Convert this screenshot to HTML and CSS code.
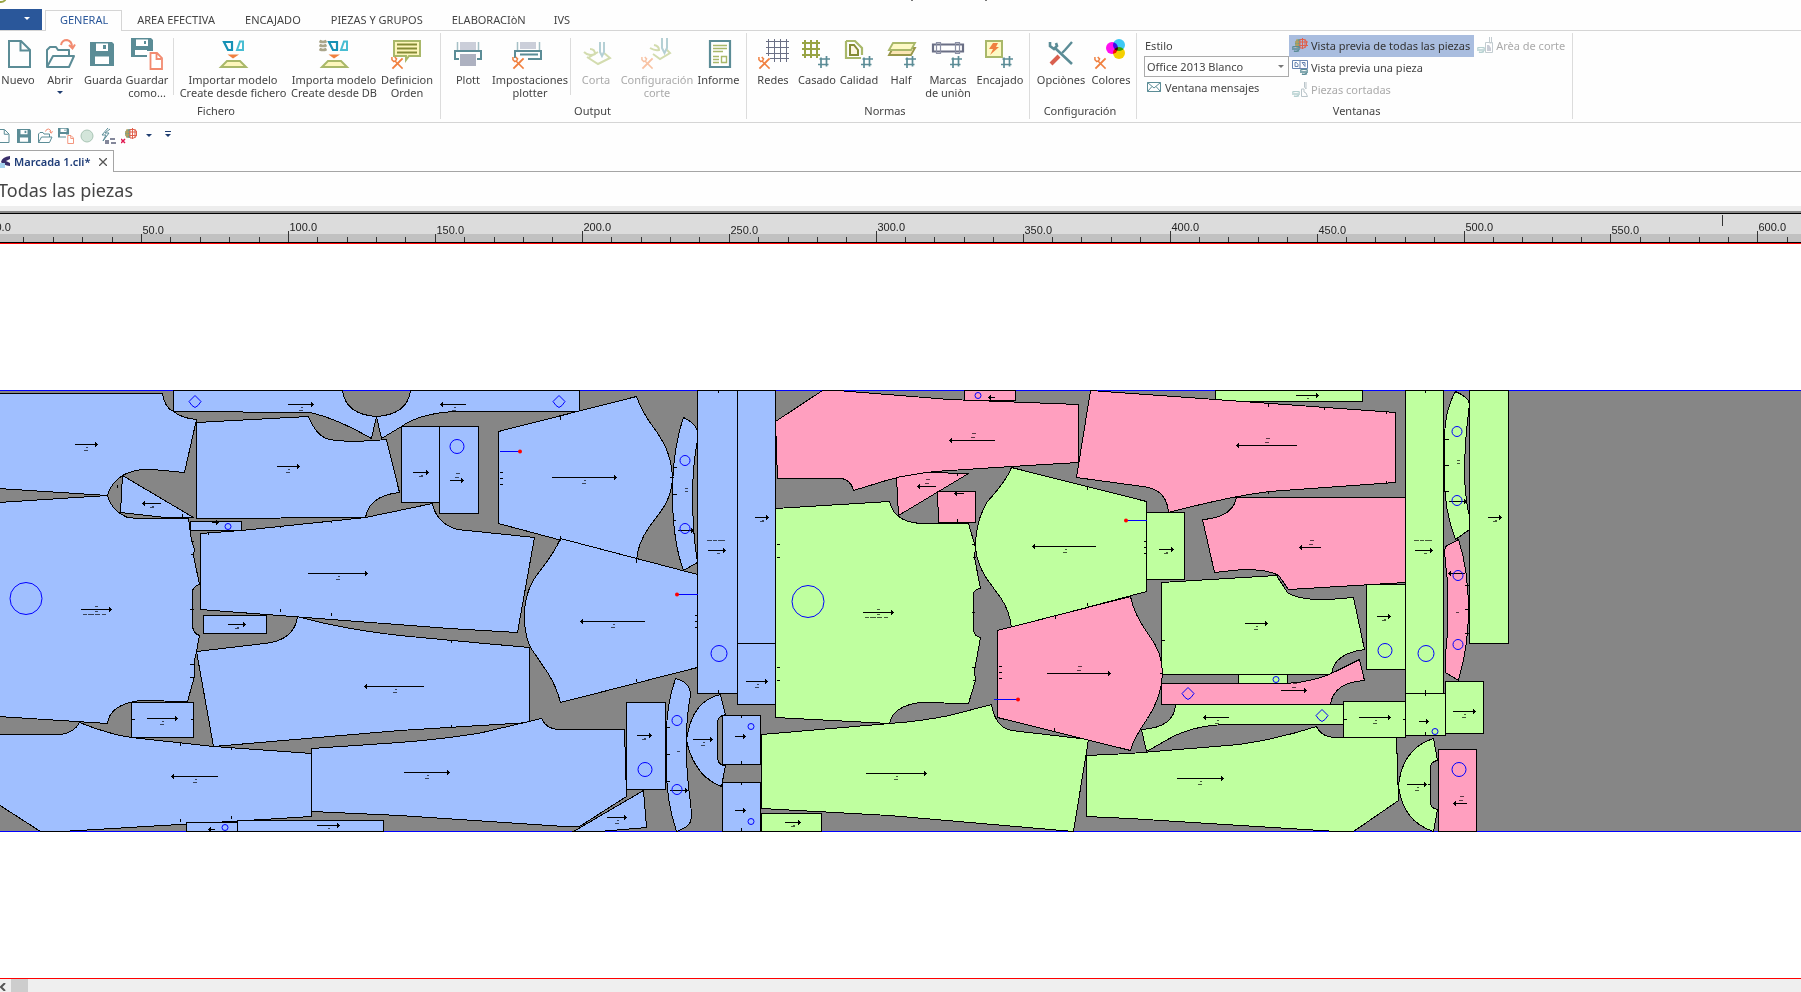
FILE: index.html
```html
<!DOCTYPE html>
<html lang="es">
<head>
<meta charset="utf-8">
<title>Marcada 1.cli</title>
<link rel="stylesheet" href="styles.css">
</head>
<body>
<svg class="defs" aria-hidden="true">
  <defs>
    <symbol id="tools" viewBox="0 0 14 14" overflow="visible">
      <path d="M1 0V3L3 5L5 4L6 2L4 0M4 4L12.500 12.500" fill="none" stroke="currentColor" stroke-width="1.600"/>
      <path d="M12.500 1.500L7 7L1.500 12.500" fill="none" stroke="currentColor" stroke-width="2"/>
    </symbol>
    <symbol id="hash" viewBox="0 0 12 12" overflow="visible">
      <path d="M3 1.500V12M8.500 0V10.500M1.500 3H12M0 8.500H10.500" fill="none" stroke="#5b8c96" stroke-width="1.700"/>
    </symbol>
    <symbol id="floppy" viewBox="0 0 24 24">
      <path d="M0 0H22L24 2V24H0Z" fill="#5b8c96"/>
      <path d="M6 1.500H18V9H6ZM5 14.500H19V22H5Z" fill="#fff"/>
      <path d="M13 3H16V7H13Z" fill="#5b8c96"/>
    </symbol>
    <symbol id="folder" viewBox="0 0 32 32">
      <path d="M3 29V12L6 9H12L14 12H25V18M3 29L9 18H30L25 29Z" fill="none" stroke="#5b8c96" stroke-width="2" stroke-linejoin="round"/>
      <path d="M17 7Q18 2 23 2Q28 3 28 9M25 7L28.500 10.500L31 6.500" fill="none" stroke="#f28b70" stroke-width="2"/>
    </symbol>
    <symbol id="saveas" viewBox="0 0 32 32">
      <path d="M0 0H20L22 2V13H16V19H0Z" fill="#5b8c96"/>
      <path d="M5 1.500H17V8H5ZM4 12H16V17H4Z" fill="#fff"/>
      <path d="M13 3H15V6H13Z" fill="#5b8c96"/>
      <path d="M19.500 15H26L31 20V31H19.500ZM25.500 16V21H30" fill="#fff" stroke="#f28b70" stroke-width="1.800"/>
    </symbol>
    <symbol id="page" viewBox="0 0 32 32">
      <path d="M7 3H19L28 12V29H7ZM18.500 4V12.500H27" fill="none" stroke="#5b8c96" stroke-width="2"/>
    </symbol>
    <symbol id="globe" viewBox="0 0 16 16">
      <path d="M8 2Q3 2 3 6.500Q3 11 8 11Z" fill="#6c9b8d"/>
      <path d="M5 2V11M3 5H8M3 8H8" stroke="#c9a14e" fill="none"/>
      <path d="M8 2.500H12L14.500 4V9L12 11H8ZM10.500 1V12M13 2V11M7 5H16M7 8.500H16" fill="none" stroke="#e0604c"/>
    </symbol>
    <symbol id="eye" viewBox="0 0 8 6">
      <path d="M0 1.500Q4-1 8 1.500M0 3H8M2 5Q4 6 7 4.500" fill="none" stroke="currentColor" stroke-width="1.400"/>
    </symbol>
  </defs>
</svg>

<header class="titlebar">
  <svg class="titlebar-art" width="1000" height="9" aria-hidden="true">
    <circle cx="1" cy="-3" r="5" fill="none" stroke="#99a546" stroke-width="2"/>
    <path d="M911 0.500H913M985 0.500H987" stroke="#777"/>
  </svg>
</header>

<nav class="tabs">
  <button class="file-menu" aria-label="Archivo"><span class="caret caret-light"></span></button>
  <button class="tab tab-active">GENERAL</button>
  <button class="tab">AREA EFECTIVA</button>
  <button class="tab">ENCAJADO</button>
  <button class="tab">PIEZAS Y GRUPOS</button>
  <button class="tab">ELABORACIòN</button>
  <button class="tab">IVS</button>
</nav>

<div class="ribbon">
  <section class="group group-file">
    <div class="tools tools-file">
      <button class="tool"><svg class="icon"><use href="#page"/></svg>Nuevo</button>
      <button class="tool"><svg class="icon"><use href="#folder"/></svg>Abrir<span class="caret caret-under"></span></button>
      <button class="tool"><svg class="icon"><use href="#floppy" x="3" y="4" width="24" height="24"/></svg>Guarda</button>
      <button class="tool"><svg class="icon"><use href="#saveas"/></svg>Guardar<br>como...</button>
      <span class="split"></span>
      <button class="tool"><svg class="icon">
        <path d="M7 4H15V12H11Z" fill="none" stroke="#1691b5" stroke-width="2.200"/>
        <path d="M20 12H26V3.500H23Z" fill="none" stroke="#48bdd2" stroke-width="2"/>
        <path d="M10.500 16.500H22L16 20.500Z" fill="#f08040"/>
        <path d="M10 23H23L29 29H4Z" fill="#fdf6bc" stroke="#a9b86a" stroke-width="2"/></svg>Importar modelo<br>Create desde fichero</button>
      <button class="tool"><svg class="icon">
        <path d="M1.500 3Q5 5 8.500 3M1.500 7Q5 9 8.500 7M1.500 11Q5 13 8.500 11" fill="none" stroke="#aaa58a" stroke-width="2.600"/>
        <path d="M11 4H19V12H15Z" fill="none" stroke="#1691b5" stroke-width="2.200"/>
        <path d="M23 12H29V3.500H26Z" fill="none" stroke="#48bdd2" stroke-width="2"/>
        <path d="M10.500 16.500H22L16 20.500Z" fill="#f08040"/>
        <path d="M10 23H23L29 29H4Z" fill="#fdf6bc" stroke="#a9b86a" stroke-width="2"/></svg>Importa modelo<br>Create desde DB</button>
      <button class="tool"><svg class="icon orange">
        <path d="M3 3H29V18H18L15 22V18H3Z" fill="#fdf6bc" stroke="#a9b86a" stroke-width="2"/>
        <path d="M6 6.500H26M6 10.500H26M6 14.500H26" stroke="#858b35" stroke-width="1.800"/>
        <use href="#tools" x="0" y="19" width="13" height="13"/></svg>Definicion<br>Orden</button>
    </div>
    <h2 class="caption">Fichero</h2>
  </section>

  <section class="group">
    <div class="tools tools-output">
      <button class="tool"><svg class="icon">
        <path d="M8 4H24V12H8Z" fill="#cbced9"/><path d="M5.500 4V12M26.500 4V12" stroke="#a5c0c6" stroke-width="1.500"/>
        <path d="M7 21H3V13H29V21H25" fill="none" stroke="#5b8c96" stroke-width="2"/>
        <path d="M8 16H24V28H8Z" fill="#adb1c0"/></svg>Plott</button>
      <button class="tool"><svg class="icon orange">
        <path d="M6 4H22V11H6Z" fill="#cbced9"/><path d="M3.500 4V12M25.500 4V12" stroke="#a5c0c6" stroke-width="1.500"/>
        <path d="M1 20V13H27V21H14M6 16.500H24" fill="none" stroke="#5b8c96" stroke-width="2"/>
        <use href="#tools" x="-2" y="19" width="13" height="13"/></svg>Impostaciones<br>plotter</button>
      <span class="split"></span>
      <button class="tool" disabled><svg class="icon">
        <path d="M7 19L18 26L30 20L24 15M4 14Q9 19 15 16Q15 11 10 11M8 20L18 14" fill="none" stroke="#d3dcaf" stroke-width="2"/>
        <path d="M20 4V14L22 18L24 14V4" fill="none" stroke="#b5d0d5" stroke-width="2"/></svg>Corta</button>
      <button class="tool" disabled><svg class="icon faded">
        <path d="M12 16L19 21L29 15L25 11M9 10Q14 13 18 12Q18 8 13 7" fill="none" stroke="#d3dcaf" stroke-width="2"/>
        <path d="M21 0V10L23.500 15L26 10V0" fill="none" stroke="#b5d0d5" stroke-width="2"/>
        <use href="#tools" x="0" y="19" width="13" height="13"/></svg>Configuración<br>corte</button>
      <button class="tool"><svg class="icon">
        <path d="M7 3H27V29H7Z" fill="#fff" stroke="#5b8c96" stroke-width="2.200"/>
        <path d="M10 7.500H24M10 10.500H24M10 13.500H20M10 18.500H16M10 21.500H16M10 24.500H16M18.500 18.500H23.500V24.500H18.500Z" fill="none" stroke="#a9b86a" stroke-width="1.400"/></svg>Informe</button>
    </div>
    <h2 class="caption">Output</h2>
  </section>

  <section class="group group-rules">
    <div class="tools tools-rules">
      <button class="tool"><svg class="icon orange">
        <path d="M11.500 1V24M17.500 1V24M23.500 1V24M29.500 1V24M9 3.500H32M9 9.500H32M9 15.500H32M9 20.500H32" stroke="#6a6f85"/>
        <path d="M0 18H13V24H0Z" fill="#fff"/>
        <use href="#tools" x="1" y="19" width="13" height="13"/></svg>Redes</button>
      <button class="tool"><svg class="icon">
        <path d="M4 2V20M10 2V20M16 2V20M1 5H19M1 11H19M1 17H19" stroke="#98a445" stroke-width="2"/>
        <use href="#hash" x="17" y="18" width="12" height="12"/></svg>Casado</button>
      <button class="tool"><svg class="icon">
        <path d="M3 3H12L19 10V17M18 20H3V3" fill="none" stroke="#a9b86a" stroke-width="2.200"/>
        <path d="M7 7H11L15 12V17H7Z" fill="#fdf6e0" stroke="#858b35" stroke-width="2"/>
        <use href="#hash" x="18" y="18" width="12" height="12"/></svg>Calidad</button>
      <button class="tool"><svg class="icon">
        <path d="M4 17L8 10H30L26 17Z" fill="#fbe5b5" stroke="#98974a" stroke-width="1.800"/>
        <path d="M4 12L8 5H30L26 12Z" fill="#fdf9c4" stroke="#a9b86a" stroke-width="1.800"/>
        <use href="#hash" x="19" y="18" width="12" height="12"/></svg>Half</button>
      <button class="tool"><svg class="icon">
        <path d="M1 6.500H31V13.500H1Z" fill="#fff" stroke="#6a6f85" stroke-width="2.200"/>
        <path d="M4.500 4.500H8.500V15.500H4.500ZM23.500 4.500H27.500V15.500H23.500Z" fill="none" stroke="#8b90a5" stroke-width="1.200"/>
        <use href="#hash" x="18" y="18" width="12" height="12"/></svg>Marcas<br>de uniòn</button>
      <button class="tool"><svg class="icon">
        <rect x="2" y="3" width="16" height="16" fill="#fdf9c4" stroke="#a9b86a" stroke-width="2"/>
        <path d="M9 5H14L12 9H15L6 17L9 11H5Z" fill="#f08040"/>
        <use href="#hash" x="17" y="18" width="12" height="12"/></svg>Encajado</button>
    </div>
    <h2 class="caption">Normas</h2>
  </section>

  <section class="group group-config">
    <div class="tools tools-config">
      <button class="tool"><svg class="icon">
        <path d="M5 4V8L9 11L12 8L11 5M10 10L27 26" fill="none" stroke="#5b8c96" stroke-width="2.600"/>
        <path d="M27 4L20 12L17 15" fill="none" stroke="#5b8c96" stroke-width="2.400"/>
        <path d="M14 18L6 26" stroke="#d9604f" stroke-width="4"/></svg>Opciònes</button>
      <button class="tool"><svg class="icon orange">
        <g class="inks"><circle cx="24" cy="7" r="6" fill="#3cc8f5"/><circle cx="17" cy="10" r="6" fill="#ff10f0"/><circle cx="24" cy="15" r="6" fill="#f5d000"/></g>
        <use href="#tools" x="-1" y="19" width="13" height="13"/></svg>Colores</button>
    </div>
    <h2 class="caption">Configuración</h2>
  </section>

  <section class="group group-windows">
    <div class="windows">
      <div class="style-box">
        <label for="style">Estilo</label>
        <span class="select-wrap"><select id="style" class="select"><option>Office 2013 Blanco</option></select><span class="caret caret-grey"></span></span>
        <button class="row"><svg class="icon16"><path d="M1.500 3.500H14.500V12.500H1.500ZM1.500 3.500L8 9L14.500 3.500M1.500 12.500L6 7.500M14.500 12.500L10 7.500" fill="none" stroke="#5b8c96"/></svg>Ventana mensajes</button>
      </div>
      <div class="views">
        <button class="row row-on"><svg class="icon16"><use href="#globe"/><use class="teal" href="#eye" x="0" y="9" width="8" height="6"/></svg>Vista previa de todas las piezas</button>
        <button class="row"><svg class="icon16"><path d="M.5 1.500H15.500V9.500H.5ZM8 1V10M3 3.500V7.500H6V5.500L4.500 3.500ZM10 3.500H13V7.500Z" fill="none" stroke="#6684b0"/><use class="teal" href="#eye" x="8" y="10" width="8" height="6"/></svg>Vista previa una pieza</button>
        <button class="row" disabled><svg class="icon16"><path d="M12.500 1V6L14 8V1M9.500 8V15.500H15.500L14 12L12 11V8Z" fill="none" stroke="#b9c4c9"/><use class="pale" href="#eye" x="0" y="10" width="8" height="6"/></svg>Piezas cortadas</button>
      </div>
      <div class="views">
        <button class="row" disabled><svg class="icon16"><path d="M12.500 0V6L14.500 6V0M8.500 5.500H15.500V15.500H8.500Z" fill="none" stroke="#c3ccd0"/><path d="M10 8H12L14 11V14H10Z" fill="#c9ccd6"/><use class="pale" href="#eye" x="0" y="10" width="8" height="6"/></svg>Arèa de corte</button>
      </div>
    </div>
    <h2 class="caption">Ventanas</h2>
  </section>
</div>

<div class="quick">
  <button class="quick-btn quick-cut" aria-label="Nuevo"><svg class="icon16"><use href="#page"/></svg></button>
  <button class="quick-btn" aria-label="Guarda"><svg class="icon16"><use href="#floppy" x="1" y="1" width="14" height="14"/></svg></button>
  <button class="quick-btn" aria-label="Abrir"><svg class="icon16"><use href="#folder"/></svg></button>
  <button class="quick-btn" aria-label="Guardar como"><svg class="icon16"><use href="#saveas"/></svg></button>
  <button class="quick-btn" aria-label="Estado"><svg class="icon16"><circle cx="8" cy="8" r="6" fill="#d3e5da" stroke="#a9c5b5"/></svg></button>
  <button class="quick-btn" aria-label="Encajado"><svg class="icon16"><path d="M8 0L2 7H6L3 13L9 5H5L10 1" fill="none" stroke="#5b8c96"/><path d="M5 12H9V16H5ZM10 10H15V12H10ZM11 14H16V16H11Z" fill="#83879a"/></svg></button>
  <button class="quick-btn" aria-label="Vista"><svg class="icon16"><use href="#globe" x="1" y="-1" width="16" height="16"/><path d="M0 11L4 15M4 11L0 15" stroke="#e01850" stroke-width="1.500"/></svg></button>
  <button class="quick-btn quick-small" aria-label="Opciones de vista"><span class="caret"></span></button>
  <button class="quick-btn quick-small" aria-label="Personalizar"><span class="caret caret-bar"></span></button>
</div>

<div class="doc-tabs">
  <div class="doc-tab">
    <svg class="doc-icon" aria-hidden="true"><path d="M10 1Q2 2 1 7Q3 10 10 11V8L6 6L10 4Z" fill="#3a2f6b"/><path d="M0 8H5V13H0Z" fill="#a5d3ef"/></svg>
    <a class="doc-name" href="#marker">Marcada 1.cli*</a>
    <button class="doc-close" aria-label="Cerrar"><svg width="8" height="8"><path d="M0 0L8 8M8 0L0 8" stroke="#555" stroke-width="1.300"/></svg></button>
  </div>
</div>

<h1 class="view-title">Todas las piezas</h1>
<div class="ruler-band"></div>
<svg class="ruler" id="ruler" aria-label="Regla"></svg>

<main class="stage" id="marker">
<svg class="layout" viewBox="0 389 1801 444" preserveAspectRatio="xMinYMid slice" aria-label="Marcada">
  <rect x="-1" y="390" width="1803" height="442" fill="#868686"/>
  <path class="bounds" d="M0 390.500H1801M0 831.500H1801"/>
  <g class="piece blue" transform="translate(-0.5 0.5)">
    <path d="M-1 393H163Q165 407 174 411Q183 418 197 419L185 472L153 469Q135 468 123 475Q111 483 108 495L-1 488Z"/>
    <path d="M-1 502L108 495Q112 510 128 517Q145 519 189 518L192 540L195 549L194 555L200 584Q193 586 193 592V626Q194 633 200 635L197 651L195 660V676L188 701L141 700Q110 704 108 723L-1 716Z"/>
    <path d="M123 475L194 517L166 517L121 512Z"/>
    <path d="M174 390H343Q346 414 377 416L372 438Q335 417 310 412L174 411Z"/>
    <path d="M411 390H580V411H455Q420 413 402 426L382 438L377 416Q408 414 411 390Z"/>
    <path d="M197 422L309 416Q315 432 326 438Q345 443 387 439L400 492Q370 495 366 517L197 518Z"/>
    <path d="M191 521H242V530H191ZM204 615H267V633H204Z"/>
    <path d="M201 533L242 530L366 517L433 503Q437 523 458 529L535 537L518 632L450 628L201 609Z"/>
    <path d="M197 651L265 643Q295 640 298 616Q340 628 400 635L485 643L530 647V722L400 730L214 746Z"/>
    <path d="M132 702H194V737H132Z"/>
    <path d="M-1 734H61Q75 732 80 722Q110 734 132 737L214 746L312 753V816L214 822L62 831H41L-1 804Z"/>
    <path d="M187 822H238V831H187ZM238 820H384V831H238Z"/>
    <path d="M312 748L400 742Q450 738 483 732L542 718Q547 729 560 729H625L627 796L580 826H565L400 815L312 811Z"/>
    <path d="M574 831L644 790L647 827L600 831Z"/>
    <path d="M627 702H666V789H627ZM402 426H440V502H402ZM440 426H479V513H440Z"/>
    <path d="M499 431L637 396Q643 413 657 431C668 447 672 460 673 477C672 500 662 510 650 526Q638 543 637 560L499 523Z"/>
    <path d="M561 538L698 574V667L561 702Q557 686 548 672L531 647Q524 632 525 612Q526 588 540 571Q555 552 561 538Z"/>
    <path d="M684 417Q695 422 698 430V440Q690 480 695 540L698 562L684 570Q673 540 673 493Q673 450 684 417Z"/>
    <path d="M698 390H738V693H698ZM738 390H776V643H738ZM738 643H776V704H738Z"/>
    <path d="M676 678Q691 682 691 694Q683 738 690 795Q693 815 691 821Q690 826 677 831Q667 800 667 770V733Q667 704 676 678Z"/>
    <path d="M721 694L726 714Q718 716 718 722V758Q719 765 726 765L722 786Q695 776 687 740Q692 700 721 694Z"/>
    <path d="M723 715H761V764H723ZM723 782H761V831H723Z"/>
  </g>
  <g class="piece green" transform="translate(-0.5 0.5)">
    <path d="M776 508L890 501Q895 523 925 523H969L976 547L975 557L981 588Q974 589 974 594V630Q975 636 981 637L975 670L976 680L969 703L920 702Q893 706 890 723L776 717Z"/>
    <path d="M762 734L890 723Q920 721 950 715L992 704Q996 727 1012 730L1089 739L1074 831L890 815L762 808Z"/>
    <path d="M762 813H822V831H762Z"/>
    <path d="M1012 467L1147 501V591L1012 627Q1010 610 1001 597L987 578Q977 562 976 547Q976 520 988 501Q1007 480 1012 467Z"/>
    <path d="M1147 512H1185V579H1147Z"/>
    <path d="M1162 582L1277 575L1288 592Q1300 600 1330 599L1354 597L1365 649Q1334 653 1332 674H1162Z"/>
    <path d="M1367 584H1406V669H1367ZM1406 390H1444V693H1406ZM1406 693H1446V735H1406ZM1470 390H1509V643H1470ZM1446 681H1484V733H1446ZM1216 390H1363V401H1216ZM1239 674H1288V683H1239Z"/>
    <path d="M1456 391Q1470 397 1470 404Q1465 440 1465 475Q1466 500 1470 516V529L1456 539Q1445 510 1445 480V440Q1445 410 1456 391Z"/>
    <path d="M1087 755L1130 753L1240 744Q1280 738 1317 726Q1322 737 1337 737H1397L1399 800L1354 831H1337L1130 818L1087 816Z"/>
    <path d="M1176 704H1344V724H1227Q1193 725 1170 738L1147 751L1142 729Q1175 727 1176 704Z"/>
    <path d="M1344 701H1406V737H1344Z"/>
    <path d="M1434 738L1438 760Q1431 761 1431 767V802Q1431 808 1438 809L1434 831Q1403 821 1399 785Q1403 748 1434 738Z"/>
  </g>
  <g class="piece pink" transform="translate(-0.5 0.5)">
    <path d="M823 390H838L950 399L1079 404V462L1012 466L935 471Q910 474 890 479L854 490Q851 478 840 478H778L776 421Z"/>
    <path d="M897 477L927 472L969 473L899 515Z"/>
    <path d="M938 491H976V522H939ZM965 390H1016V400H965Z"/>
    <path d="M1091 390L1396 412V482L1270 491Q1230 496 1169 512Q1167 488 1143 486L1077 477Z"/>
    <path d="M1237 497H1406V582L1289 589L1280 576Q1272 569 1243 569L1215 572L1203 519Q1233 517 1237 497Z"/>
    <path d="M998 630L1131 596Q1134 613 1149 634Q1163 652 1163 673Q1162 697 1148 718Q1134 738 1131 750L998 717Z"/>
    <path d="M1162 683H1287Q1317 681 1336 671L1360 659L1365 680Q1334 682 1331 704H1162Z"/>
    <path d="M1459 539L1446 546Q1444 550 1448 580V633Q1445 660 1446 672L1459 680Q1469 645 1469 610Q1469 570 1459 539Z"/>
    <path d="M1439 749H1477V831H1439Z"/>
  </g>
  <g id="grain" transform="translate(0 0.5)"></g>
  <path class="notch" d="M500 472h3M500 478h3M500 484h3M695 615h3M695 621h3M695 627h3M1144 541h3M1144 547h3M1144 553h3M999 666h3M999 672h3M999 678h3M777 544h3M777 557h3M777 667h3M777 680h3M972 544h4M973 557h3M972 667h4M973 680h3M972 612h3M191 541h3M191 554h3M190 609h4M190 664h4M190 677h4M132 719h3M191 719h3M673 467h4M673 494h4M673 520h3M667 727h3M667 754h3M667 781h3M670 477h4M560 536v5M560 416v4M636 558v5M636 679v3M718 390v3M718 690v3M741 715v3M741 761v3M741 782v3M741 828v3M1425 390v3M1425 690v6M1425 732v3M1445 439h4M1445 465h4M1445 491h4M1465 585h4M1465 609h4M1465 633h4M1344 719h3M1403 719h3M1087 487v3M1087 603v3M1055 616v3M1054 728v3M957 473v3M957 519v3M1162 640h3M1160 673h3M1268 404v3M1324 407v3M1386 411v3M1386 481v3M1268 491v3M182 514v3M117 485v3M208 533v2M280 526v2M331 521v2M280 612v-3M331 616v-3M180 743v3M231 747v3M180 822v-3M231 819v-3M451 640v3M451 728v-3M1431 784h-3"/>
  <g class="mark" transform="translate(0 0.5)">
    <circle cx="26" cy="598" r="16"/><circle cx="228" cy="526" r="3"/><circle cx="457" cy="446" r="7"/>
    <circle cx="685" cy="460" r="5"/><circle cx="685" cy="528" r="5"/><circle cx="719" cy="653" r="8"/>
    <circle cx="677" cy="720" r="5"/><circle cx="677" cy="789" r="5"/><circle cx="645" cy="769" r="7"/>
    <circle cx="751" cy="726" r="3"/><circle cx="751" cy="821" r="3"/><circle cx="225" cy="827" r="3"/>
    <circle cx="808" cy="601" r="16"/><circle cx="978" cy="395" r="3"/><circle cx="1457" cy="431" r="5"/>
    <circle cx="1457" cy="500" r="5"/><circle cx="1458" cy="575" r="5"/><circle cx="1458" cy="644" r="5"/>
    <circle cx="1385" cy="650" r="7"/><circle cx="1426" cy="653" r="8"/><circle cx="1459" cy="769" r="7"/>
    <circle cx="1435" cy="731" r="3"/><circle cx="1276" cy="679" r="3"/>
    <path d="M195 395L201 401L198 405L195 407L192 405L189 401ZM559 395L565 401L562 405L559 407L556 405L553 401ZM1188 687L1194 693L1191 697L1188 699L1185 697L1182 693ZM1322 709L1328 715L1325 719L1322 721L1319 719L1316 715Z"/>
    <path d="M500 451H520M677 594H698M1126 520H1147M994 699H1018"/>
  </g>
  <g class="pins" transform="translate(0 0.5)"><circle cx="520" cy="451" r="2"/><circle cx="677" cy="594" r="2"/><circle cx="1126" cy="520" r="2"/><circle cx="1018" cy="699" r="2"/></g>
</svg>
</main>

<footer class="scrollbar">
  <button class="scroll-left" aria-label="Desplazar a la izquierda"><svg width="6" height="8"><path d="M5 0L1 4L5 8" fill="none" stroke="#555" stroke-width="2"/></svg></button>
  <span class="thumb"></span>
</footer>
<script src="app.js"></script>
</body>
</html>
```

FILE: styles.css
```css
* { box-sizing: border-box; }

html, body { margin: 0; }

body {
  display: flex;
  flex-direction: column;
  min-height: 100vh;
  overflow-x: hidden;
  background: #fefefe;
  color: #444;
  font: 11px/13px "Noto Sans", "Open Sans", sans-serif;
}

button, select {
  margin: 0;
  padding: 0;
  border: 0;
  background: none;
  color: inherit;
  font: inherit;
}

button:disabled { color: #aaa; }

h1, h2 { margin: 0; font-weight: 400; }

.defs { position: absolute; width: 0; height: 0; }

.titlebar { height: 9px; overflow: hidden; }
.titlebar-art { display: block; }

/* Carets */
.caret {
  width: 0;
  height: 0;
  border: 3px solid transparent;
  border-top-color: #1f3d70;
  border-bottom: 0;
}
.caret-light { border-top-color: #fff; }
.caret-grey { border-top-color: #777; }
.caret-under { margin-top: 5px; }
.caret-bar { position: relative; }
.caret-bar::before {
  content: "";
  position: absolute;
  left: -3px;
  top: -6px;
  width: 6px;
  height: 1px;
  background: #1f3d70;
}

/* Ribbon tabs */
.tabs {
  display: flex;
  height: 22px;
  border-bottom: 1px solid #d5d5d5;
}
.file-menu {
  display: flex;
  align-items: center;
  justify-content: flex-end;
  width: 42px;
  height: 21px;
  margin-right: 3px;
  padding: 0 12px 3px 0;
  background: #2a579a;
}
.tab {
  height: 22px;
  padding: 0 15px 2px;
  border: 0 solid #d5d5d5;
  white-space: nowrap;
}
.tab:nth-last-child(-n+2) { padding: 0 14px 2px; }
.tab-active {
  margin-top: 1px;
  height: 21px;
  padding: 0 13px 3px 14px;
  border-width: 1px 1px 0;
  background: #fefefe;
  color: #2a579a;
}

/* Ribbon */
.ribbon {
  display: flex;
  padding: 2px 0 3px;
  border-bottom: 1px solid #d5d5d5;
}
.group {
  display: flex;
  flex-direction: column;
  height: 86px;
  padding-right: 2px;
  border-right: 1px solid #dcdcdc;
}
.tools { display: grid; height: 71px; padding-top: 5px; }
.tools-file { grid-template-columns: 36px 48px 38px 50px 2px 118px 84px 62px; }
.tools-output { grid-template-columns: 54px 70px 6px 50px 72px 51px; }
.tools-rules { grid-template-columns: 52px 36px 48px 36px 58px 46px; }
.tools-config { grid-template-columns: 62px 38px; }
.group-rules, .group-config { padding-right: 6px; }
.group-file .caption { padding-right: 6px; }
.tool {
  display: flex;
  flex-direction: column;
  align-items: center;
  text-align: center;
  white-space: nowrap;
}
.icon { width: 32px; height: 32px; margin-bottom: 3px; flex: none; overflow: visible; }
.icon16 { width: 16px; height: 16px; flex: none; }
.orange { color: #f08040; }
.faded { color: #f8c3a4; }
.teal { color: #5b8c96; }
.pale { color: #b5d0d0; }
.inks { isolation: isolate; }
.inks circle { mix-blend-mode: multiply; }
.split { justify-self: end; width: 1px; height: 57px; background: #dcdcdc; }
.caption { font-size: 11px; line-height: 14px; text-align: center; }

.group-windows { padding: 0 3px 0 7px; }
.windows { display: flex; height: 71px; padding-top: 2px; }
.style-box { display: flex; flex-direction: column; width: 145px; }
.style-box label { padding: 4px 1px; }
.style-box .row { height: 22px; padding-left: 2px; }
.select-wrap { position: relative; height: 21px; }
.select {
  width: 100%;
  height: 21px;
  padding: 0 2px;
  border: 1px solid #ababab;
  background: #fefefe;
  appearance: none;
}
.select-wrap .caret { position: absolute; right: 5px; top: 9px; }
.row {
  display: flex;
  align-items: center;
  gap: 3px;
  height: 22px;
  padding: 0 4px 2px 3px;
  white-space: nowrap;
}
.row-on { background: #a9bddf; color: #333; }

/* Quick access bar */
.quick { display: flex; align-items: center; gap: 5px; height: 27px; padding-bottom: 2px; }
.quick-btn { display: flex; justify-content: center; width: 16px; }
.quick-cut { margin-left: -5px; }
.quick-small { width: 14px; }

/* Document tabs */
.doc-tabs { display: flex; height: 22px; border-bottom: 1px solid #a5a5a5; }
.doc-tab {
  display: flex;
  align-items: center;
  height: 22px;
  padding: 0 6px 0 0;
  border: 1px solid #a5a5a5;
  border-width: 1px 1px 0 0;
  background: #fefefe;
}
.doc-icon { width: 11px; height: 14px; margin-right: 3px; }
.doc-name { color: #1f3d78; font-weight: 600; text-decoration: none; }
.doc-close { display: flex; margin-left: 9px; }

.view-title { height: 34px; margin-left: -2px; font-size: 18px; line-height: 36px; }

/* Ruler */
.ruler-band { height: 8px; border-bottom: 1px solid #000; background: linear-gradient(#ededed 5px, #888 5px); }
.ruler {
  display: block;
  width: 100%;
  height: 29px;
  border-bottom: 1px solid #000;
  background: linear-gradient(#dcdcdc 20px, #c1c1c1 20px);
}
.ruler line { stroke: #333; shape-rendering: crispEdges; }
.ruler text { fill: #222; font: 11px "Liberation Sans", Arial, sans-serif; }

/* Marker stage */
.stage {
  flex: 1;
  padding-top: 145px;
  border: 1px solid #f00;
  border-width: 1px 0;
  background: #fff;
}
.layout { display: block; width: 100%; height: 444px; }
.bounds { stroke: #0000ff; shape-rendering: crispEdges; }
.piece path { stroke: #000; shape-rendering: crispEdges; }
.blue { fill: #a0bfff; }
.green { fill: #bfff9f; }
.pink { fill: #ff9fbf; }
.mark { fill: none; stroke: #0000ff; }
.pins { fill: #ff0000; }
.notch, .thread, .speck { fill: none; stroke: #000; shape-rendering: crispEdges; }
.speck { opacity: .65; }

/* Horizontal scroll bar */
.scrollbar { display: flex; align-items: center; height: 13px; background: #efefef; }
.scroll-left { display: flex; width: 11px; padding-top: 3px; }
.thumb { width: 17px; height: 13px; background: #cdcdcd; }
```

FILE: app.js
```js
const NS = "http://www.w3.org/2000/svg";

function add(parent, name, attrs, text) {
  const node = document.createElementNS(NS, name);
  for (const key in attrs) node.setAttribute(key, attrs[key]);
  if (text) node.textContent = text;
  parent.appendChild(node);
}

// Ruler: one tick every 10 units, a label every 50, as far as the window reaches.
const ruler = document.getElementById("ruler");
const reach = ruler.getBoundingClientRect().width;
for (let k = 0; -5.5 + 29.39 * k < reach; k++) {
  const x = Math.floor(-5.5 + 29.39 * k) + 0.5;
  const y = k % 10 === 0 ? 17 : k % 5 === 0 ? 20 : 23;
  add(ruler, "line", { x1: x, x2: x, y1: y, y2: 28 });
  if (k % 5 === 0) {
    add(ruler, "text", { x: x + 1, y: k % 10 === 0 ? 17 : 20 }, (k * 10).toFixed(1));
  }
}
add(ruler, "line", { x1: 1722.5, x2: 1722.5, y1: 1, y2: 12 });

// Grain lines: start, end, y, tip side (1 right, -1 left), note (1 below, -1 above, 2 name below, -2 name above).
const grains = [
  [75, 97, 444, 1, 1], [277, 299, 466, 1, 1], [143, 161, 503, -1, 1], [212, 218, 522, 1, 0],
  [308, 367, 573, 1, 1], [81, 111, 609, 1, 2], [288, 313, 404, 1, 1], [228, 245, 624, 1, 1],
  [365, 424, 686, -1, 1], [147, 177, 718, 1, 1], [172, 218, 776, -1, 1], [317, 339, 825, 1, 1],
  [209, 215, 829, -1, 0], [441, 466, 404, -1, 1], [413, 428, 472, 1, 1], [450, 463, 480, 1, -1],
  [552, 616, 477, 1, 1], [678, 693, 530, 1, 0], [708, 725, 550, 1, -2], [755, 768, 517, 1, 1],
  [581, 645, 621, -1, 1], [404, 449, 772, 1, 1], [746, 767, 681, 1, 1], [637, 651, 735, 1, 1],
  [693, 712, 739, 1, 1], [735, 745, 736, 1, 0], [735, 745, 810, 1, 0], [607, 626, 817, 1, 1],
  [670, 687, 790, 1, 0], [950, 995, 440, -1, -1], [918, 936, 486, -1, -1], [955, 964, 493, -1, 0],
  [1033, 1096, 546, -1, 1], [863, 893, 612, 1, 2], [1047, 1110, 673, 1, -1], [866, 926, 773, 1, 1],
  [785, 800, 822, 1, 1], [1159, 1173, 549, 1, 1], [989, 995, 397, -1, 0], [1296, 1318, 395, 1, 1],
  [1237, 1297, 445, -1, -1], [1300, 1321, 547, -1, -1], [1415, 1432, 550, 1, -2], [1488, 1501, 517, 1, 1],
  [1449, 1466, 501, 1, 0], [1449, 1465, 573, -1, 0], [1377, 1390, 616, 1, 1], [1245, 1267, 623, 1, 1],
  [1281, 1306, 690, 1, -1], [1204, 1229, 717, -1, 1], [1359, 1390, 717, 1, 1], [1419, 1428, 721, 1, 0],
  [1453, 1475, 711, 1, 1], [1177, 1223, 778, 1, 1], [1407, 1426, 784, 1, 1], [1454, 1467, 803, -1, -1]
];
const layer = document.getElementById("grain");
let threads = "";
let specks = "M685 488h3M685 491h3M677 751h3M1457 460h3M1457 463h3M1456 612h3";
for (const [a, b, y, tip, note] of grains) {
  const end = tip > 0 ? b : a;
  const mid = Math.round((a + b) / 2);
  threads += `M${a} ${y}H${b}M${end - 2 * tip} ${y - 2}L${end} ${y}L${end - 2 * tip} ${y + 2}`;
  if (note === 1) specks += `M${mid} ${y + 3}h2M${mid - 2} ${y + (b - a > 18 ? 6 : 4)}h4`;
  if (note === -1) specks += `M${mid - 2} ${y - 3}h4M${mid - 1} ${y - 7}h4`;
  if (note === 2) specks += `M${mid - 1} ${y - 3}h3M${mid - 1} ${y + 2}h3M${mid - 13} ${y + 5}h4m1 0h6m1 0h5m2 0h4`;
  if (note === -2) specks += `M${mid} ${y + 3}h3M${mid - 10} ${y - 10}h5m1 0h4m1 0h7`;
}
add(layer, "path", { class: "thread", d: threads });
add(layer, "path", { class: "speck", d: specks });
```
